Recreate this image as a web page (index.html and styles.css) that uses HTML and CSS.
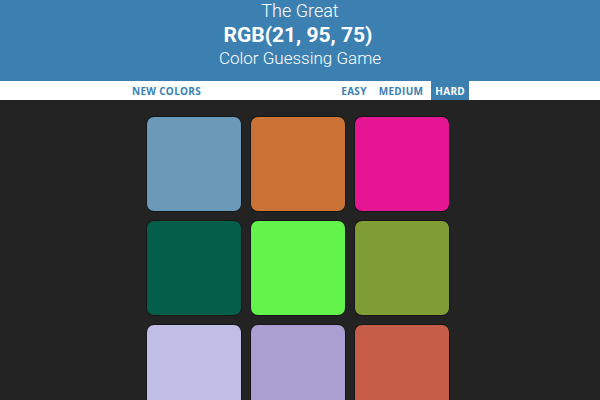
FILE: index.html
```html
<!DOCTYPE html>
<html>
<head>
<meta charset="utf-8">
<title>Color Guessing Game</title>
<link rel="stylesheet" href="styles.css">
</head>
<body>
<header class="header">
  <div class="title-line">The Great</div>
  <div class="rgb-line">RGB(21, 95, 75)</div>
  <div class="title-line sub">Color Guessing Game</div>
</header>
<nav class="stripe">
  <div class="stripe-inner">
    <button class="btn">New Colors</button>
    <div class="modes">
      <button class="btn">Easy</button>
      <button class="btn">Medium</button>
      <button class="btn selected">Hard</button>
    </div>
  </div>
</nav>
<main class="board">
  <div class="square" style="background:#6b99b8"></div>
  <div class="square" style="background:#cb7337"></div>
  <div class="square" style="background:#e61593"></div>
  <div class="square" style="background:#035f4a"></div>
  <div class="square" style="background:#63f44b"></div>
  <div class="square" style="background:#7f9c35"></div>
  <div class="square" style="background:#c0bde6"></div>
  <div class="square" style="background:#aa9fd0"></div>
  <div class="square" style="background:#c55d48"></div>
</main>
</body>
</html>
```
FILE: styles.css
```css
html, body {
  margin: 0;
  padding: 0;
}
body {
  background: #232323;
  font-family: Roboto, "Liberation Sans", sans-serif;
  overflow: hidden;
}
.header {
  background: #3c80b2;
  color: #fff;
  text-align: center;
  padding: 0 0 13px;
}
.title-line {
  font-size: 18px;
  line-height: 22px;
  font-weight: 300;
}
.title-line.sub {
  font-size: 17px;
  line-height: 20px;
}
.rgb-line {
  font-size: 21px;
  line-height: 26px;
  font-weight: 700;
  padding-right: 4px;
}
.stripe {
  background: #fff;
  height: 19px;
}
.stripe-inner {
  width: 341px;
  margin: 0 auto;
  padding-right: 3px;
  display: flex;
  justify-content: space-between;
  height: 100%;
}
.modes {
  display: flex;
  gap: 4px;
}
.btn {
  border: none;
  background: none;
  margin: 0;
  padding: 0 4px;
  height: 19px;
  font-family: "Open Sans", sans-serif;
  font-weight: 700;
  font-size: 10px;
  letter-spacing: 0.3px;
  text-transform: uppercase;
  color: #3c80b2;
}
.btn.selected {
  background: #3c80b2;
  color: #fff;
}
.board {
  width: 302px;
  margin: 17px 0 0 calc(50% - 153px);
  display: grid;
  grid-template-columns: repeat(3, 94px);
  gap: 10px;
}
.square {
  width: 94px;
  height: 94px;
  border-radius: 7px;
  box-shadow: 0 0 0 1px rgba(0,0,0,0.35);
}
```
